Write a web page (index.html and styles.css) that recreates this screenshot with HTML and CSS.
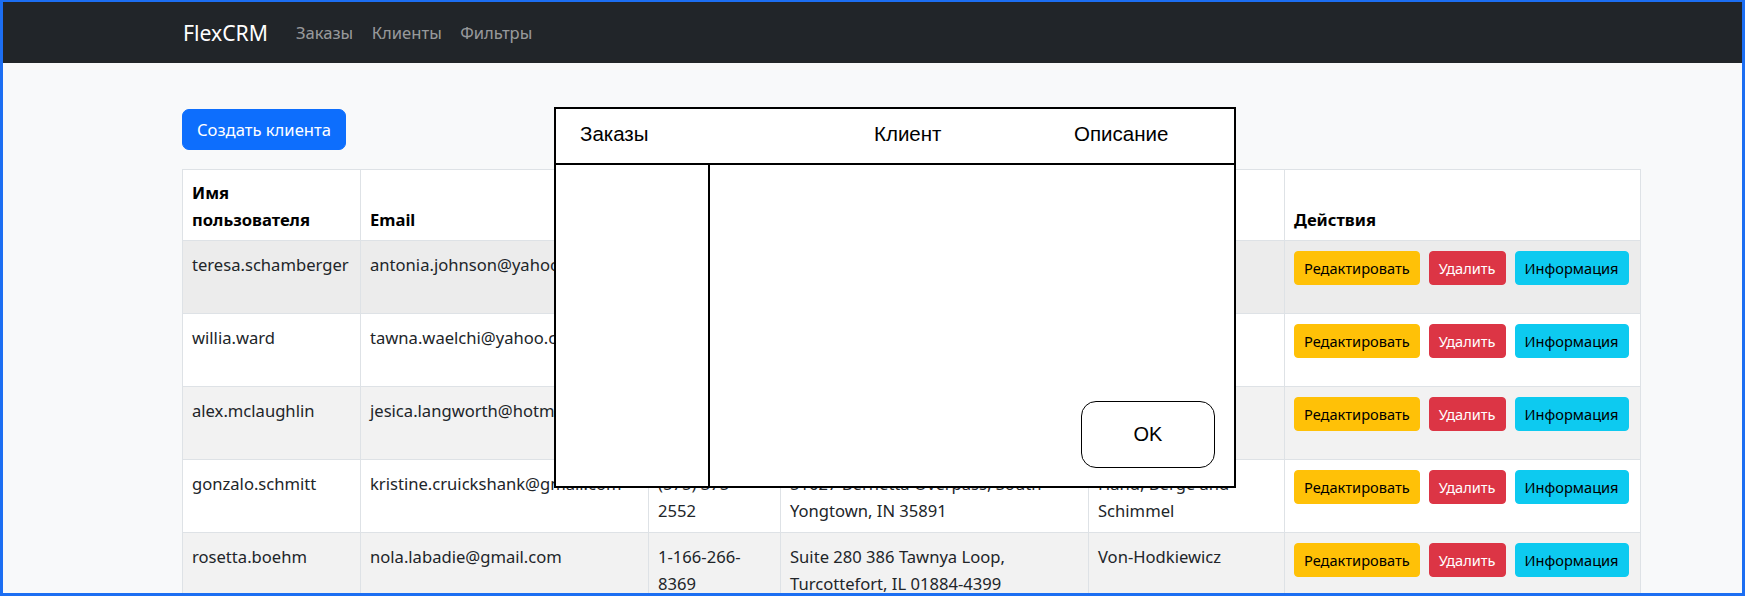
FILE: index.html
```html
<!DOCTYPE html>
<html lang="ru">
<head>
<meta charset="utf-8">
<title>FlexCRM</title>
<link rel="stylesheet" href="styles.css">
</head>
<body>
<div class="frame">
  <nav class="navbar">
    <div class="nav-inner">
      <a class="brand">FlexCRM</a>
      <ul class="nav">
        <li class="nav-link">Заказы</li>
        <li class="nav-link">Клиенты</li>
        <li class="nav-link">Фильтры</li>
      </ul>
    </div>
  </nav>

  <main class="page">
    <button class="btn btn-primary">Создать клиента</button>
    <table class="table">
      <colgroup>
        <col class="c1"><col class="c2"><col class="c3"><col class="c4"><col class="c5"><col class="c6">
      </colgroup>
      <thead>
        <tr>
          <th>Имя пользователя</th>
          <th>Email</th>
          <th>Телефон</th>
          <th>Адрес</th>
          <th>Компания</th>
          <th>Действия</th>
        </tr>
      </thead>
      <tbody>
        <tr class="hover">
          <td>teresa.schamberger</td>
          <td>antonia.johnson@yahoo.com</td>
          <td>(512) 804-3391</td>
          <td>8822 Kessler Roads, East Lanita, MO 21337</td>
          <td>Kub LLC</td>
          <td><div class="actions"><button class="btn btn-sm btn-warning">Редактировать</button><button class="btn btn-sm btn-danger">Удалить</button><button class="btn btn-sm btn-info">Информация</button></div></td>
        </tr>
        <tr>
          <td>willia.ward</td>
          <td>tawna.waelchi@yahoo.com</td>
          <td>1-634-710-2285</td>
          <td>Apt. 417 5061 Gleason Mill, Lake Avery, OR 50411</td>
          <td>Moen Inc</td>
          <td><div class="actions"><button class="btn btn-sm btn-warning">Редактировать</button><button class="btn btn-sm btn-danger">Удалить</button><button class="btn btn-sm btn-info">Информация</button></div></td>
        </tr>
        <tr class="striped">
          <td>alex.mclaughlin</td>
          <td>jesica.langworth@hotmail.com</td>
          <td>(301) 556-0937</td>
          <td>72 Dicki Stream, North Ellis, WA 77812</td>
          <td>Rath Group</td>
          <td><div class="actions"><button class="btn btn-sm btn-warning">Редактировать</button><button class="btn btn-sm btn-danger">Удалить</button><button class="btn btn-sm btn-info">Информация</button></div></td>
        </tr>
        <tr>
          <td>gonzalo.schmitt</td>
          <td>kristine.cruickshank@gmail.com</td>
          <td>(575) 375-2552</td>
          <td>51627 Bernetta Overpass, South Yongtown, IN 35891</td>
          <td>Hand, Berge and Schimmel</td>
          <td><div class="actions"><button class="btn btn-sm btn-warning">Редактировать</button><button class="btn btn-sm btn-danger">Удалить</button><button class="btn btn-sm btn-info">Информация</button></div></td>
        </tr>
        <tr class="striped">
          <td>rosetta.boehm</td>
          <td>nola.labadie@gmail.com</td>
          <td>1-166-266-8369</td>
          <td>Suite 280 386 Tawnya Loop, Turcottefort, IL 01884-4399</td>
          <td>Von-Hodkiewicz</td>
          <td><div class="actions"><button class="btn btn-sm btn-warning">Редактировать</button><button class="btn btn-sm btn-danger">Удалить</button><button class="btn btn-sm btn-info">Информация</button></div></td>
        </tr>
      </tbody>
    </table>
  </main>

  <div class="modal">
    <div class="modal-head">
      <span>Заказы</span>
      <span>Клиент</span>
      <span>Описание</span>
    </div>
    <div class="modal-body">
      <div class="modal-list"></div>
      <div class="modal-main">
        <button class="ok-btn">OK</button>
      </div>
    </div>
  </div>
</div>
</body>
</html>
```

FILE: styles.css
```css
* { box-sizing: border-box; }

html, body {
  margin: 0;
  background: #ffffff;
}

body {
  font-family: "Noto Sans", "Open Sans", sans-serif;
  font-size: 16.6px;
  line-height: 27px;
  color: #212529;
}

.frame {
  position: relative;
  width: 1745px;
  height: 596px;
  border: 3px solid #1c6ef2;
  border-top-width: 2px;
  background: #f8f9fa;
  overflow: hidden;
}

/* navbar */
.navbar {
  background: #212529;
  height: 61px;
}

.nav-inner {
  height: 100%;
  display: flex;
  align-items: center;
  padding-left: 180px;
}

.brand {
  color: #ffffff;
  font-size: 21.2px;
  margin-right: 28px;
}

.nav {
  display: flex;
  gap: 18.5px;
  list-style: none;
  margin: 0;
  padding: 0;
}

.nav-link {
  color: rgba(255, 255, 255, 0.55);
}

/* page */
.page {
  padding-left: 179px;
  padding-top: 46px;
}

.btn {
  font-family: inherit;
  border: 1px solid transparent;
  cursor: pointer;
}

.btn-primary {
  display: block;
  height: 41px;
  padding: 0 14px;
  font-size: 16.6px;
  line-height: 27px;
  border-radius: 7px;
  background: #0d6efd;
  border-color: #0d6efd;
  color: #ffffff;
}

.table {
  margin-top: 19px;
  width: 1458px;
  table-layout: fixed;
  border-collapse: collapse;
  background: #ffffff;
}

.c1 { width: 178px; }
.c2 { width: 288px; }
.c3 { width: 132px; }
.c4 { width: 308px; }
.c5 { width: 196px; }
.c6 { width: 356px; }

.table th,
.table td {
  border: 1px solid #dee2e6;
  padding: 10px 9px 8px;
  text-align: left;
  vertical-align: top;
  color: #212529;
}

.table th {
  vertical-align: bottom;
  font-weight: 700;
  color: #000000;
  padding-top: 9px;
  padding-bottom: 7px;
}

.table tr.striped td { background: #f2f2f2; }
.table tr.hover td { background: #ececec; }

.actions {
  display: flex;
  gap: 9px;
}

.btn-sm {
  height: 34px;
  padding: 0 9px;
  font-size: 14.6px;
  line-height: 23px;
  border-radius: 4px;
}

.btn-warning { background: #ffc107; border-color: #ffc107; color: #000000; }
.btn-danger { background: #dc3545; border-color: #dc3545; color: #ffffff; }
.btn-info { background: #0dcaf0; border-color: #0dcaf0; color: #000000; }

/* modal overlay */
.modal {
  position: absolute;
  left: 551px;
  top: 105px;
  width: 682px;
  height: 381px;
  border: 2px solid #000000;
  background: #ffffff;
  display: flex;
  flex-direction: column;
  font-family: "Liberation Sans", Arial, sans-serif;
  color: #000000;
}

.modal-head {
  height: 56px;
  flex: none;
  border-bottom: 2px solid #000000;
  display: grid;
  grid-template-columns: 294px 200px 1fr;
  align-items: center;
  padding-left: 24px;
  padding-bottom: 6px;
  font-size: 20.5px;
}

.modal-body {
  flex: 1;
  display: flex;
}

.modal-list {
  width: 154px;
  border-right: 2px solid #000000;
}

.modal-main {
  flex: 1;
  display: flex;
  justify-content: flex-end;
  align-items: flex-end;
  padding: 0 19px 18px 0;
}

.ok-btn {
  width: 134px;
  height: 67px;
  border: 1.5px solid #000000;
  border-radius: 15px;
  background: #ffffff;
  font-family: "Liberation Sans", Arial, sans-serif;
  font-size: 20px;
  color: #000000;
}
```
